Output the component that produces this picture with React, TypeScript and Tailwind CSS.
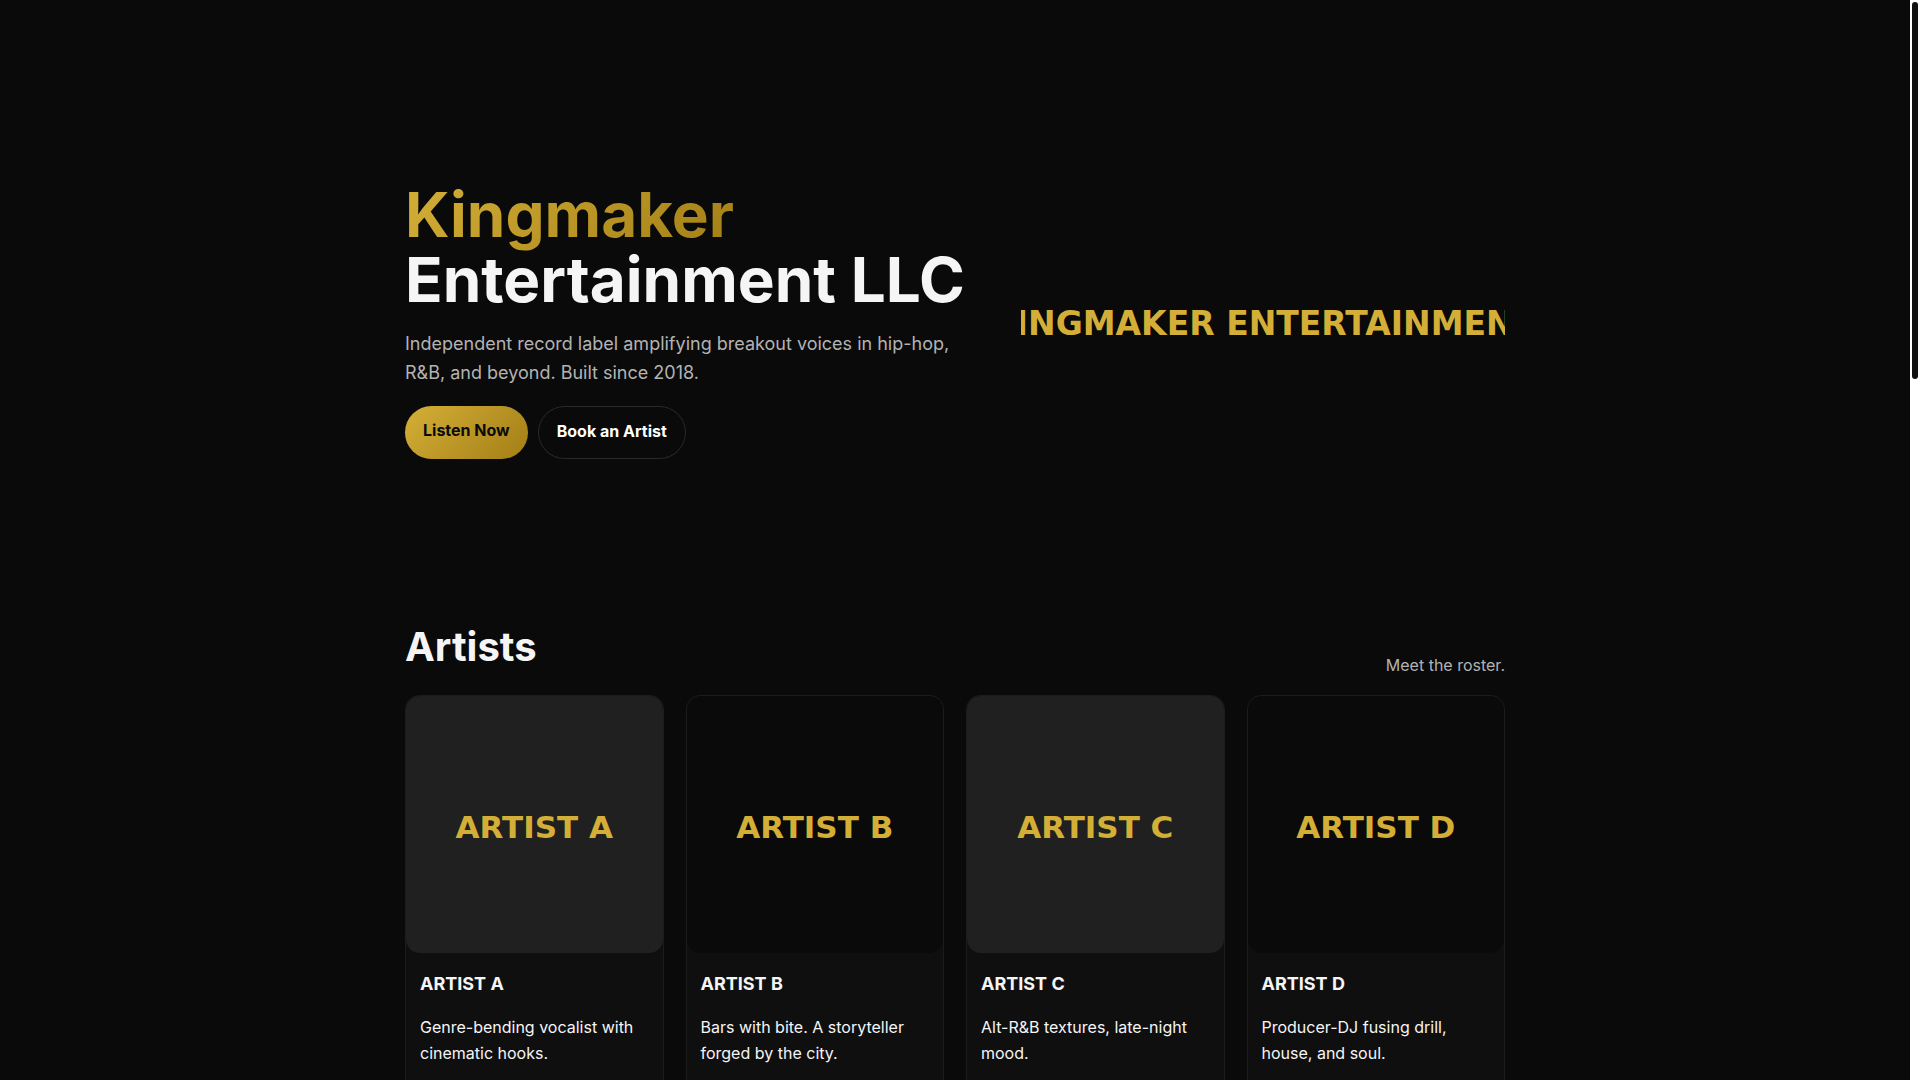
const artists = [
    { name: "ARTIST A", bio: "Genre-bending vocalist with cinematic hooks.", cover: "bg-[#202020]" },
    { name: "ARTIST B", bio: "Bars with bite. A storyteller forged by the city.", cover: "bg-[#0a0a0a]" },
    { name: "ARTIST C", bio: "Alt-R&B textures, late-night mood.", cover: "bg-[#202020]" },
    { name: "ARTIST D", bio: "Producer-DJ fusing drill, house, and soul.", cover: "bg-[#0a0a0a]" },
];

function Hero() {
    return (
        <section className="grid grid-cols-[1.2fr_1fr] items-center gap-9 pt-[182px] pb-[156px]">
            <div>
                <h1 className="text-[62px] leading-[65px] font-bold">
                    <span className="bg-linear-135 from-[#d4af37] to-[#a37f15] bg-clip-text text-transparent">
                        Kingmaker
                    </span>
                    <br />
                    Entertainment LLC
                </h1>
                <p className="mt-[17px] text-lg leading-[29px] text-[#b3b3b3]">
                    Independent record label amplifying breakout voices in hip-hop, R&amp;B, and beyond. Built since 2018.
                </p>
                <div className="mt-[19px] flex gap-[10px] font-bold">
                    <a
                        href="#listen"
                        className="rounded-full bg-linear-135 from-[#d4af37] to-[#a37f15] px-[18px] pt-3 pb-[14px] leading-[25px] text-[#0a0a0a]"
                    >
                        Listen Now
                    </a>
                    <a
                        href="#book"
                        className="rounded-full border border-[#2a2a2a] px-[18px] pt-3 pb-[14px] leading-[25px] text-white"
                    >
                        Book an Artist
                    </a>
                </div>
            </div>
            <div className="flex justify-center overflow-hidden pt-[6px] font-['DejaVu_Sans',sans-serif] text-[33px] font-bold whitespace-nowrap text-[#d4af37]">
                KINGMAKER ENTERTAINMENT
            </div>
        </section>
    );
}

function Artists() {
    return (
        <section id="artists">
            <div className="mb-4 flex items-end justify-between">
                <h2 className="text-[40px] leading-[64px] font-bold">Artists</h2>
                <p className="leading-7 text-[#b3b3b3]">Meet the roster.</p>
            </div>
            <div className="grid grid-cols-4 gap-[22px]">
                {artists.map((artist) => (
                    <article
                        key={artist.name}
                        className="overflow-hidden rounded-[14px] border border-[#1c1c1c] bg-[#0f0f0f]"
                    >
                        <div
                            className={`flex aspect-square items-center justify-center rounded-[14px] pt-[6px] font-['DejaVu_Sans',sans-serif] text-[31px] font-bold text-[#d4af37] ${artist.cover}`}
                        >
                            {artist.name}
                        </div>
                        <div className="px-[14px] py-4">
                            <h3 className="text-lg leading-[29px] font-bold">{artist.name}</h3>
                            <p className="my-4 leading-[26px]">{artist.bio}</p>
                        </div>
                    </article>
                ))}
            </div>
        </section>
    );
}

export default function App() {
    return (
        <div className="flex h-screen overflow-hidden bg-[#0a0a0a] font-[Inter,sans-serif] text-[#f5f5f5]">
            <main className="min-w-0 flex-1">
                <div className="mx-auto max-w-[1100px]">
                    <Hero />
                    <Artists />
                </div>
            </main>
            {/* Scroll track */}
            <div className="w-[10px] bg-white p-[2px]">
                <div className="h-[35%] rounded-full bg-[#111111]" />
            </div>
        </div>
    );
}
